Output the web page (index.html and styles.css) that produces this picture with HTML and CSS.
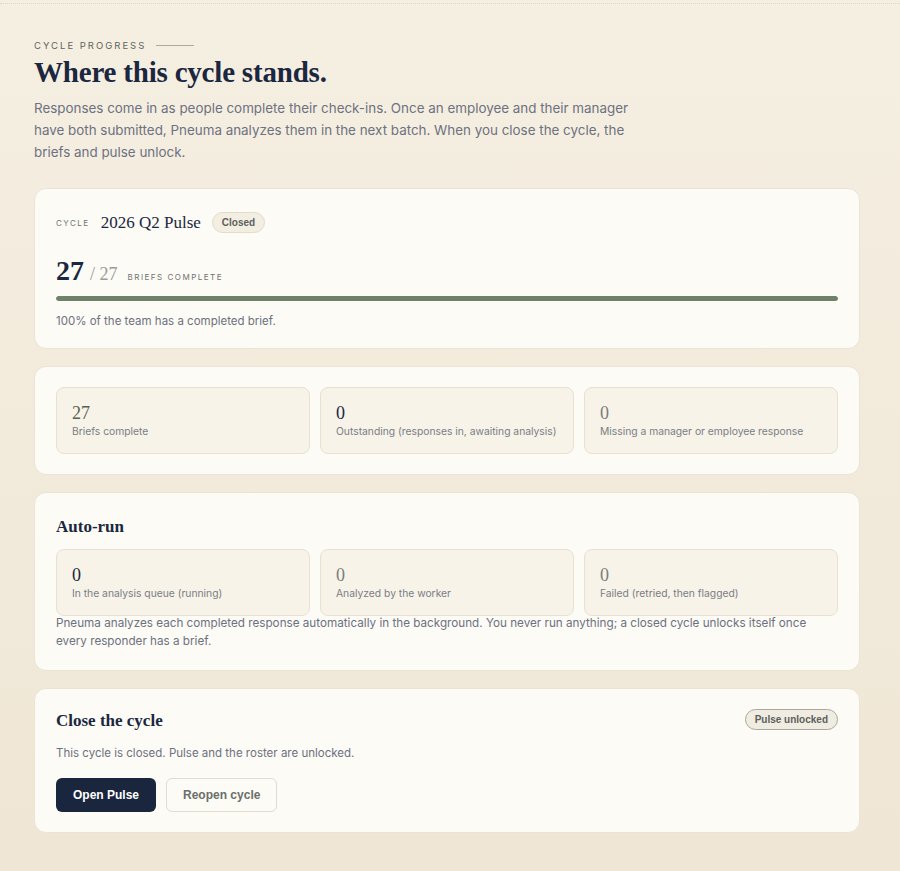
FILE: index.html
```html
<!DOCTYPE html>
<html lang="en">
<head>
    <meta charset="UTF-8">
    <meta name="viewport" content="width=device-width, initial-scale=1.0">
    <title>Cycle progress</title>
    <link rel="stylesheet" href="styles.css">
</head>
<body>
    <div class="topline"></div>

    <main class="page">
        <div class="eyebrow">CYCLE PROGRESS <span class="rule"></span></div>
        <h1>Where this cycle stands.</h1>
        <p class="lead">Responses come in as people complete their check-ins. Once an employee and their manager have both submitted, Pneuma analyzes them in the next batch. When you close the cycle, the briefs and pulse unlock.</p>

        <section class="card">
            <div class="cycle-row">
                <span class="tiny-label">CYCLE</span>
                <span class="cycle-name">2026 Q2 Pulse</span>
                <span class="pill">Closed</span>
            </div>
            <div class="count-row">
                <span class="count-big">27</span>
                <span class="count-total">/ 27</span>
                <span class="tiny-label">BRIEFS COMPLETE</span>
            </div>
            <div class="bar"><div class="bar-fill" style="width: 100%"></div></div>
            <p class="small">100% of the team has a completed brief.</p>
        </section>

        <section class="card">
            <div class="stats">
                <div class="stat">
                    <div class="stat-num green">27</div>
                    <div class="stat-label">Briefs complete</div>
                </div>
                <div class="stat">
                    <div class="stat-num">0</div>
                    <div class="stat-label">Outstanding (responses in, awaiting analysis)</div>
                </div>
                <div class="stat">
                    <div class="stat-num muted">0</div>
                    <div class="stat-label">Missing a manager or employee response</div>
                </div>
            </div>
        </section>

        <section class="card">
            <h2>Auto-run</h2>
            <div class="stats">
                <div class="stat">
                    <div class="stat-num">0</div>
                    <div class="stat-label">In the analysis queue (running)</div>
                </div>
                <div class="stat">
                    <div class="stat-num muted">0</div>
                    <div class="stat-label">Analyzed by the worker</div>
                </div>
                <div class="stat">
                    <div class="stat-num muted">0</div>
                    <div class="stat-label">Failed (retried, then flagged)</div>
                </div>
            </div>
            <p class="note">Pneuma analyzes each completed response automatically in the background. You never run anything; a closed cycle unlocks itself once every responder has a brief.</p>
        </section>

        <section class="card">
            <div class="card-head">
                <h2>Close the cycle</h2>
                <span class="pill outline">Pulse unlocked</span>
            </div>
            <p class="small">This cycle is closed. Pulse and the roster are unlocked.</p>
            <div class="actions">
                <button class="btn primary">Open Pulse</button>
                <button class="btn ghost">Reopen cycle</button>
            </div>
        </section>
    </main>
</body>
</html>
```

FILE: styles.css
```css
body {
    margin: 0;
    padding: 0;
    font-family: Inter, "Noto Sans", sans-serif;
    color: #1b2740;
    background: linear-gradient(180deg, #f5efe2 0%, #efe6d5 100%);
    min-height: 871px;
}

.topline {
    height: 3px;
    border-bottom: 1px dotted #ddd5c6;
}

.page {
    padding: 36px 40px 20px 34px;
}

.eyebrow {
    display: flex;
    align-items: center;
    gap: 10px;
    font-size: 9.5px;
    letter-spacing: 2px;
    color: #5f645f;
}

.eyebrow .rule {
    width: 38px;
    height: 1px;
    background: #a9ab9f;
}

h1 {
    margin: 3px 0 0;
    font-family: "Liberation Serif", serif;
    font-size: 29px;
    line-height: 36px;
    font-weight: 700;
    color: #1b2740;
    letter-spacing: -0.2px;
}

.lead {
    margin: 7px 0 25px;
    max-width: 610px;
    font-size: 13.4px;
    line-height: 22px;
    color: #6d7180;
}

.card {
    background: #fcfbf6;
    border: 1px solid #ebe4d5;
    border-radius: 12px;
    padding: 20px 21px 20px;
    margin-bottom: 17px;
}

.cycle-row {
    display: flex;
    align-items: center;
    gap: 11px;
    padding-top: 3px;
}

.tiny-label {
    font-size: 8px;
    letter-spacing: 1.5px;
    color: #6f7270;
}

.cycle-name {
    font-family: "Liberation Serif", serif;
    font-size: 17px;
    color: #1b2740;
}

.pill {
    font-family: "Liberation Sans", sans-serif;
    font-size: 10px;
    font-weight: 700;
    color: #5c605c;
    background: #f3eee2;
    border: 1px solid #e4dccb;
    border-radius: 11px;
    padding: 4px 9px;
}

.pill.outline {
    background: #f0ece2;
    border-color: #a7a89f;
}

.count-row {
    display: flex;
    align-items: baseline;
    gap: 6px;
    margin-top: 22px;
}

.count-big {
    font-family: "Liberation Serif", serif;
    font-size: 28px;
    font-weight: 700;
    color: #1b2740;
}

.count-total {
    font-family: "Liberation Serif", serif;
    font-size: 18px;
    color: #9a9b98;
    margin-right: 4px;
}

.bar {
    height: 5px;
    background: #e9e4d7;
    border-radius: 3px;
    margin-top: 9px;
    overflow: hidden;
}

.bar-fill {
    height: 100%;
    background: #6f8169;
    border-radius: 3px;
}

.small {
    margin: 13px 0 0;
    font-size: 11.5px;
    color: #6d7180;
}

.stats {
    display: grid;
    grid-template-columns: repeat(3, 1fr);
    gap: 10px;
}

.stat {
    background: #f7f3e8;
    border: 1px solid #e8e1d2;
    border-radius: 8px;
    padding: 15px 14px 14px 15px;
    height: 36px;
}

.stat-num {
    font-family: "Liberation Serif", serif;
    font-size: 18px;
    line-height: 20px;
    color: #1b2740;
}

.stat-num.green {
    color: #56644f;
}

.stat-num.muted {
    color: #7a7d7a;
}

.stat-label {
    font-size: 10.3px;
    color: #7a7e86;
    margin-top: 2px;
    white-space: nowrap;
}

h2 {
    margin: 4px 0 12px;
    font-family: "Liberation Serif", serif;
    font-size: 17px;
    font-weight: 700;
    color: #1b2740;
}

.note {
    margin: -2px 0 0;
    font-size: 11.7px;
    line-height: 18px;
    color: #6d7180;
}

.card-head {
    display: flex;
    justify-content: space-between;
    align-items: flex-start;
}

.card-head h2 {
    margin: 2px 0 2px;
}

.actions {
    display: flex;
    gap: 10px;
    margin-top: 18px;
}

.btn {
    font-family: "Liberation Sans", sans-serif;
    font-size: 12px;
    font-weight: 700;
    height: 34px;
    border-radius: 6px;
    cursor: pointer;
}

.btn.primary {
    background: #1a263d;
    color: #ffffff;
    border: none;
    padding: 0 17px;
}

.btn.ghost {
    background: transparent;
    color: #6b6e6b;
    border: 1px solid #e2dccf;
    padding: 0 16px;
}
```
